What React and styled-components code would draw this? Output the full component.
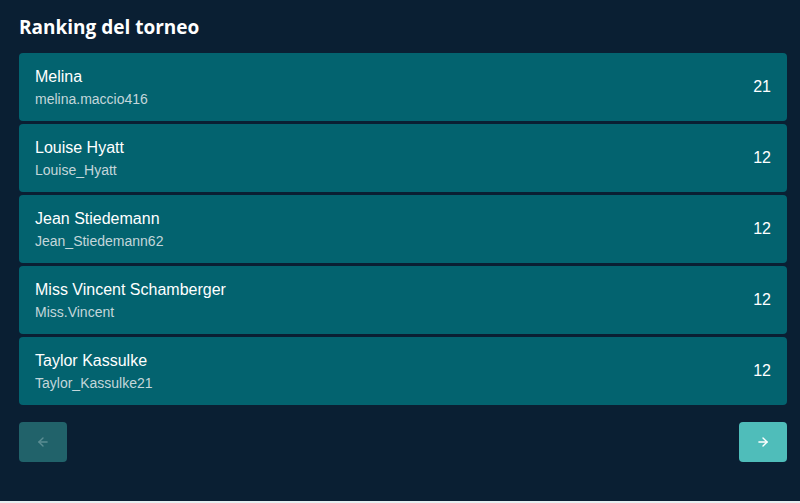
import React from 'react';
import styled, { createGlobalStyle } from 'styled-components';

const GlobalStyle = createGlobalStyle`
    body {
        margin: 0;
        background: #e6eef0;
        font-family: 'Liberation Sans', Arial, sans-serif;
    }
`;

const Page = styled.div`
    background: #0a1f33;
    height: 501px;
    padding: 14px 13px 0 19px;
    box-sizing: border-box;
`;

const Title = styled.h2`
    margin: 0 0 13px;
    font-family: 'Open Sans', sans-serif;
    font-weight: 700;
    font-size: 19px;
    line-height: 26px;
    color: #ffffff;
`;

const List = styled.div`
    display: flex;
    flex-direction: column;
    gap: 3px;
`;

const Row = styled.div`
    display: flex;
    align-items: center;
    justify-content: space-between;
    height: 68px;
    padding: 0 16px;
    box-sizing: border-box;
    background: #03636f;
    border-radius: 4px;
`;

const Info = styled.div`
    display: flex;
    flex-direction: column;
    gap: 4px;
    margin-top: 1px;
`;

const Name = styled.div`
    font-size: 16px;
    color: #ffffff;
    line-height: 20px;
`;

const Username = styled.div`
    font-size: 14px;
    color: #c3d6da;
    line-height: 17px;
`;

const Points = styled.div`
    font-size: 16px;
    color: #ffffff;
`;

const Pager = styled.div`
    display: flex;
    justify-content: space-between;
    margin-top: 17px;
`;

const PageButton = styled.button`
    width: 48px;
    height: 40px;
    border: none;
    border-radius: 4px;
    display: flex;
    align-items: center;
    justify-content: center;
    background: ${(p) => (p.disabled ? '#21626a' : '#4fbdba')};
    color: ${(p) => (p.disabled ? '#5b8d93' : '#ffffff')};
    cursor: ${(p) => (p.disabled ? 'default' : 'pointer')};
`;

const players = [
    { name: 'Melina', user: 'melina.maccio416', points: 21 },
    { name: 'Louise Hyatt', user: 'Louise_Hyatt', points: 12 },
    { name: 'Jean Stiedemann', user: 'Jean_Stiedemann62', points: 12 },
    { name: 'Miss Vincent Schamberger', user: 'Miss.Vincent', points: 12 },
    { name: 'Taylor Kassulke', user: 'Taylor_Kassulke21', points: 12 },
];

const Arrow = ({ dir }) => (
    <svg width='14' height='14' viewBox='0 0 24 24' fill='none' stroke='currentColor' strokeWidth='2.4' strokeLinecap='round' strokeLinejoin='round'>
        {dir === 'left' ? (
            <>
                <path d='M19 12H5' />
                <path d='M12 19l-7-7 7-7' />
            </>
        ) : (
            <>
                <path d='M5 12h14' />
                <path d='M12 5l7 7-7 7' />
            </>
        )}
    </svg>
);

const App = () => {
    return (
        <>
            <GlobalStyle />
            <Page>
                <Title>Ranking del torneo</Title>
                <List>
                    {players.map((p) => (
                        <Row key={p.user}>
                            <Info>
                                <Name>{p.name}</Name>
                                <Username>{p.user}</Username>
                            </Info>
                            <Points>{p.points}</Points>
                        </Row>
                    ))}
                </List>
                <Pager>
                    <PageButton disabled>
                        <Arrow dir='left' />
                    </PageButton>
                    <PageButton>
                        <Arrow dir='right' />
                    </PageButton>
                </Pager>
            </Page>
        </>
    );
};

export default App;
